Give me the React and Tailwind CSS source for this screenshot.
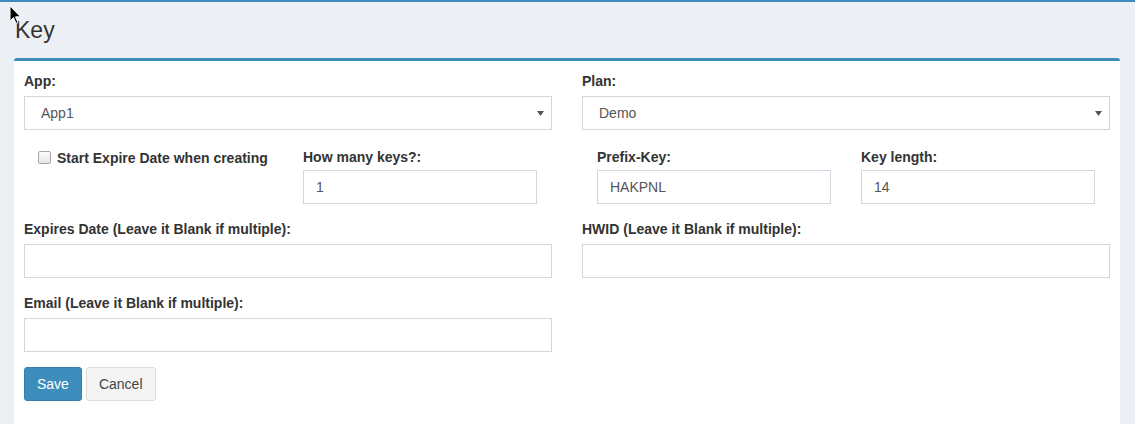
import React from "react";

const Label = ({ children }) => (
  <label className="block text-[14px] leading-[20px] font-bold text-[#333] mb-[5px]">
    {children}
  </label>
);

const TextInput = ({ value = "" }) => (
  <input
    type="text"
    readOnly
    value={value}
    className="block w-full h-[34px] border border-[#d2d6de] bg-white px-[12px] text-[14px] text-[#555] outline-none"
  />
);

const FakeSelect = ({ value }) => (
  <div className="flex h-[34px] w-full items-center justify-between border border-[#d2d6de] bg-white pl-[16px] pr-[7px] text-[14px] text-[#555]">
    <span>{value}</span>
    <svg width="7" height="5" viewBox="0 0 7 5">
      <polygon points="0,0 7,0 3.5,5" fill="#555" />
    </svg>
  </div>
);

export default function App() {
  return (
    <div className="relative min-h-[424px] bg-[#ecf0f5] border-t-2 border-[#3c8dbc] font-['Liberation_Sans',Arial,sans-serif] overflow-hidden">
      {/* mouse cursor from the screenshot */}
      <svg
        className="absolute left-[9px] top-[3px]"
        width="13"
        height="20"
        viewBox="0 0 13 20"
      >
        <polygon
          points="1,1 1,16 4.5,12.5 7,18.5 9,17.5 6.5,11.8 11.5,11.8"
          fill="#000"
          stroke="#fff"
          strokeWidth="1"
        />
      </svg>

      {/* header */}
      <div className="pl-[15px] pt-[16px]">
        <h1 className="text-[23px] leading-[25px] font-normal text-[#333]">Key</h1>
      </div>

      {/* box */}
      <div className="mt-[15px] ml-[14px] mr-[15px] rounded-t-[3px] border-t-[3px] border-[#3c8dbc] bg-white shadow-[0_1px_1px_rgba(0,0,0,0.1)]">
        <div className="p-[10px] pb-[40px]">
          {/* App / Plan */}
          <div className="flex gap-[30px] mb-[15px]">
            <div className="w-[528px]">
              <Label>App:</Label>
              <FakeSelect value="App1" />
            </div>
            <div className="w-[528px]">
              <Label>Plan:</Label>
              <FakeSelect value="Demo" />
            </div>
          </div>

          {/* options row */}
          <div className="flex gap-[30px] mb-[15px]">
            <div className="flex w-[528px]">
              <div className="w-[279px] pl-[14px] pt-[3px]">
                <label className="flex items-start gap-[6px] text-[14px] leading-[20px] font-bold text-[#333]">
                  <span className="mt-[3px] h-[13px] w-[13px] shrink-0 rounded-[2px] border border-[#a6a6a6] bg-gradient-to-b from-[#fcfcfc] to-[#e6e6e6]" />
                  Start Expire Date when creating
                </label>
              </div>
              <div className="w-[234px] pt-[2px]">
                <label className="block text-[14px] leading-[20px] font-bold text-[#333] mb-[3px]">
                  How many keys?:
                </label>
                <TextInput value="1" />
              </div>
            </div>
            <div className="flex w-[528px] pl-[15px] gap-[30px] pt-[2px]">
              <div className="w-[234px]">
                <label className="block text-[14px] leading-[20px] font-bold text-[#333] mb-[3px]">
                  Prefix-Key:
                </label>
                <TextInput value="HAKPNL" />
              </div>
              <div className="w-[234px]">
                <label className="block text-[14px] leading-[20px] font-bold text-[#333] mb-[3px]">
                  Key length:
                </label>
                <TextInput value="14" />
              </div>
            </div>
          </div>

          {/* expires / hwid */}
          <div className="flex gap-[30px] mb-[15px]">
            <div className="w-[528px]">
              <Label>Expires Date (Leave it Blank if multiple):</Label>
              <TextInput />
            </div>
            <div className="w-[528px]">
              <Label>HWID (Leave it Blank if multiple):</Label>
              <TextInput />
            </div>
          </div>

          {/* email */}
          <div className="w-[528px] mb-[15px]">
            <Label>Email (Leave it Blank if multiple):</Label>
            <TextInput />
          </div>

          {/* buttons */}
          <div className="flex gap-[4px]">
            <button className="h-[34px] rounded-[3px] border border-[#367fa9] bg-[#3c8dbc] px-[12px] text-[14px] text-white">
              Save
            </button>
            <button className="h-[34px] rounded-[3px] border border-[#ddd] bg-[#f4f4f4] px-[12px] text-[14px] text-[#444]">
              Cancel
            </button>
          </div>
        </div>
      </div>
    </div>
  );
}
